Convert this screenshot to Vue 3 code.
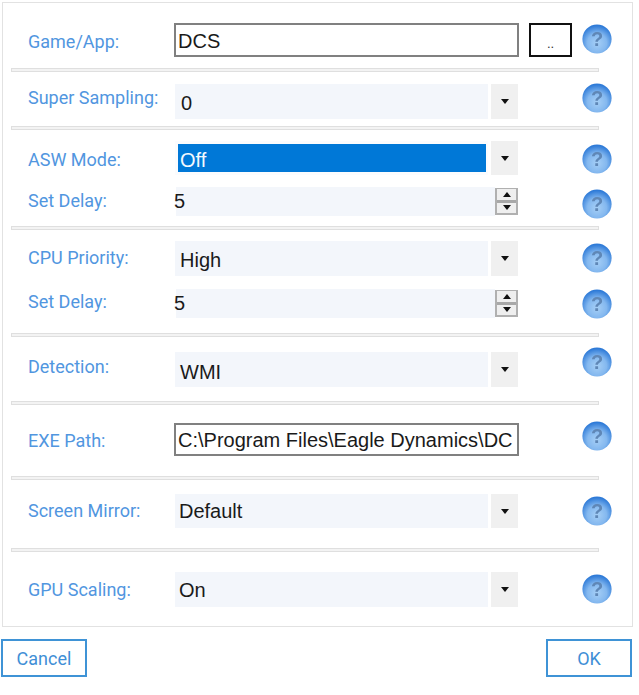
<script setup>
const sections = [
  { pad: [20, 11], rows: [{ id: 1, label: 'Game/App:', type: 'input', value: 'DCS', h: 34, ly: 2, hy: 1, vy: 1, browse: true }] },
  { pad: [12, 7], rows: [{ id: 2, label: 'Super Sampling:', type: 'select', value: '0', h: 35, ly: -4, hy: -1, tx: 6, vy: 2 }] },
  { pad: [11, 10], rows: [
    { id: 3, label: 'ASW Mode:', type: 'selected', value: 'Off', h: 34, ly: 2, hy: 3, vy: 2 },
    { id: 4, label: 'Set Delay:', type: 'spin', value: '5', h: 29, ly: -1, hy: 2, vy: 0, gap: 12 }
  ] },
  { pad: [11, 15], rows: [
    { id: 5, label: 'CPU Priority:', type: 'select', value: 'High', h: 35, ly: -1, hy: 2, tx: 5, vy: 2 },
    { id: 6, label: 'Set Delay:', type: 'spin', value: '5', h: 29, ly: -2, hy: 0, vy: 0, gap: 13 }
  ] },
  { pad: [15, 14], rows: [{ id: 7, label: 'Detection:', type: 'select', value: 'WMI', h: 35, ly: -3, hy: -5, tx: 5, vy: 3 }] },
  { pad: [18, 20], rows: [{ id: 8, label: 'EXE Path:', type: 'input', value: 'C:\\Program Files\\Eagle Dynamics\\DC', h: 33, ly: 1, hy: -2, vy: 1 }] },
  { pad: [14, 20], rows: [{ id: 9, label: 'Screen Mirror:', type: 'select', value: 'Default', h: 34, ly: 0, hy: 2, tx: 4, vy: 0 }] },
  { pad: [20, 19], rows: [{ id: 10, label: 'GPU Scaling:', type: 'select', value: 'On', h: 35, ly: 0, hy: 2, tx: 4, vy: 1 }] }
]
</script>

<template>
  <div class="dialog">
    <div class="panel">
      <template v-for="(section, i) in sections" :key="i">
        <div class="sep" v-if="i > 0"></div>
        <section :style="{ paddingTop: section.pad[0] + 'px', paddingBottom: section.pad[1] + 'px' }">
          <div
            v-for="row in section.rows"
            :key="row.id"
            class="row"
            :style="{ height: row.h + 'px', marginTop: (row.gap || 0) + 'px' }"
          >
            <span class="label" :style="{ lineHeight: row.h + 'px', marginTop: row.ly + 'px' }">{{ row.label }}</span>

            <div v-if="row.type === 'input'" class="field input">
              <span :style="{ marginTop: row.vy * 2 + 'px' }">{{ row.value }}</span>
            </div>

            <div v-else-if="row.type === 'select'" class="field select">
              <div class="value" :style="{ paddingLeft: row.tx + 'px' }">
                <span :style="{ marginTop: row.vy * 2 + 'px' }">{{ row.value }}</span>
              </div>
              <div class="arrow"><i class="down"></i></div>
            </div>

            <div v-else-if="row.type === 'selected'" class="field select">
              <div class="value chosen">
                <div class="chosen-bar"><span :style="{ marginTop: row.vy * 2 + 'px' }">{{ row.value }}</span></div>
              </div>
              <div class="arrow"><i class="down"></i></div>
            </div>

            <div v-else class="field spin">
              <div class="spin-value"><span>{{ row.value }}</span></div>
              <div class="spinner">
                <div class="spin-btn"><i class="up"></i></div>
                <div class="spin-btn"><i class="down"></i></div>
              </div>
            </div>

            <button v-if="row.browse" class="browse" type="button">..</button>

            <svg class="help" :style="{ marginTop: row.hy + 'px' }" width="30" height="30" viewBox="0 0 30 30" aria-label="Help">
              <defs>
                <radialGradient :id="'orb' + row.id" cx="50%" cy="64%" r="60%">
                  <stop offset="0%" stop-color="#a6cff6" />
                  <stop offset="55%" stop-color="#84b8ef" />
                  <stop offset="100%" stop-color="#2f7bd8" />
                </radialGradient>
              </defs>
              <circle cx="15" cy="15" r="14.6" :fill="`url(#orb${row.id})`" />
              <text x="15" y="21.5" text-anchor="middle" class="mark">?</text>
            </svg>
          </div>
        </section>
      </template>
    </div>

    <div class="footer">
      <button class="action cancel" type="button">Cancel</button>
      <button class="action ok" type="button">OK</button>
    </div>
  </div>
</template>

<style scoped>
.dialog {
  width: 639px;
  height: 695px;
  padding-top: 2px;
  box-sizing: border-box;
  background: #fff;
  font-family: Roboto, "Open Sans", sans-serif;
  overflow: hidden;
}
.panel {
  margin-left: 2px;
  width: 631px;
  height: 625px;
  box-sizing: border-box;
  border: 1px solid #e2e2e2;
}
.sep {
  width: 588px;
  height: 4px;
  margin-left: 8px;
  box-sizing: border-box;
  background: #f3f3f3;
  border: 1px solid #dfdfdf;
}
.row {
  display: flex;
  align-items: flex-start;
  padding: 0 20px 0 25px;
}
.label {
  width: 146px;
  flex: none;
  font-size: 18px;
  color: #5196df;
  white-space: nowrap;
}
.field {
  height: 100%;
  font: 20px "Liberation Sans", Arial, sans-serif;
  color: #1a1a1a;
  flex: none;
}
.input {
  width: 345px;
  box-sizing: border-box;
  border: 2px solid #808080;
  padding-left: 2px;
  display: flex;
  align-items: center;
  white-space: nowrap;
  overflow: hidden;
}
.select {
  margin-left: 1px;
  width: 343px;
  display: flex;
  gap: 3px;
}
.value {
  flex: 1;
  background: #f3f6fb;
  display: flex;
  align-items: center;
}
.chosen {
  background: #fbfcfe;
  padding: 3px 2px 3px 3px;
}
.chosen-bar {
  flex: 1;
  height: 100%;
  background: #0078d7;
  color: #f4f9fe;
  display: flex;
  align-items: center;
  padding-left: 2px;
}
.arrow {
  width: 27px;
  background: #f0f0f0;
  display: flex;
  align-items: center;
  justify-content: center;
}
.down, .up {
  display: block;
  width: 0;
  height: 0;
  border-left: 4.5px solid transparent;
  border-right: 4.5px solid transparent;
}
.down { border-top: 5px solid #111; }
.up { border-bottom: 5px solid #111; }
.spin {
  width: 344px;
  display: flex;
  align-items: stretch;
}
.spin-value {
  flex: 1;
  display: flex;
  align-items: center;
  background: linear-gradient(to right, #fff 2px, #f3f6fb 2px);
}
.spinner {
  width: 23px;
  margin: 1px 0;
  box-sizing: border-box;
  border: 2px solid #b0b0b0;
  border-top-width: 1px;
  background: #a8a8a8;
  display: flex;
  flex-direction: column;
  gap: 3px;
}
.spin-btn {
  flex: 1;
  background: #efefef;
  display: flex;
  align-items: center;
  justify-content: center;
}
.browse {
  width: 43px;
  height: 100%;
  margin-left: 10px;
  box-sizing: border-box;
  padding: 6px 0 0;
  background: #fff;
  border: 2px solid #111;
  font: 13px "Liberation Sans", sans-serif;
  color: #333;
}
.help {
  margin-left: auto;
  flex: none;
  filter: blur(0.5px);
}
.mark {
  font: bold 20px "Liberation Sans", sans-serif;
  fill: #5f87b6;
}
.footer {
  display: flex;
  justify-content: space-between;
  margin: 12px 7px 0 1px;
}
.action {
  width: 86px;
  height: 38px;
  box-sizing: border-box;
  background: #fff;
  border: 2px solid #3f93d6;
  color: #3f8fd6;
  font: 18px Roboto, "Open Sans", sans-serif;
}
</style>
